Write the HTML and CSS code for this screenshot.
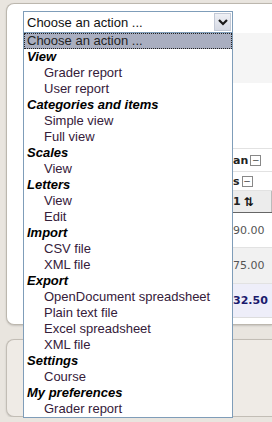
FILE: index.html
```html
<!DOCTYPE html>
<html lang="en">
<head>
    <meta charset="UTF-8">
    <title>Gradebook actions</title>
    <link rel="stylesheet" href="styles.css">
</head>
<body>
    <div class="page">
        <div class="panel">
            <div class="select">
                <span class="select-text">Choose an action ...</span>
                <span class="select-btn">
                    <svg width="10" height="7" viewBox="0 0 10 7"><polyline points="1,1 5,5 9,1" fill="none" stroke="#1a1a1a" stroke-width="2.2"/></svg>
                </span>
            </div>

            <div class="grades">
                <div class="band"></div>
                <div class="row toggle first"><b>an</b><span class="minus">&minus;</span></div>
                <div class="row toggle"><b>s</b><span class="minus">&minus;</span></div>
                <div class="row head"><b>1</b><span class="sort">&#8645;</span></div>
                <div class="row num">90.00</div>
                <div class="row num alt">75.00</div>
                <div class="row num avg">32.50</div>
            </div>
        </div>
        <div class="panel lower"></div>
    </div>

    <ul class="dropdown">
        <li class="selected">Choose an action ...</li>
        <li class="group">View</li>
        <li class="opt">Grader report</li>
        <li class="opt">User report</li>
        <li class="group">Categories and items</li>
        <li class="opt">Simple view</li>
        <li class="opt">Full view</li>
        <li class="group">Scales</li>
        <li class="opt">View</li>
        <li class="group">Letters</li>
        <li class="opt">View</li>
        <li class="opt">Edit</li>
        <li class="group">Import</li>
        <li class="opt">CSV file</li>
        <li class="opt">XML file</li>
        <li class="group">Export</li>
        <li class="opt">OpenDocument spreadsheet</li>
        <li class="opt">Plain text file</li>
        <li class="opt">Excel spreadsheet</li>
        <li class="opt">XML file</li>
        <li class="group">Settings</li>
        <li class="opt">Course</li>
        <li class="group">My preferences</li>
        <li class="opt">Grader report</li>
    </ul>
</body>
</html>
```

FILE: styles.css
```css
body {
    margin: 0;
    background-color: #e9e5df;
    font-family: 'Liberation Sans', Arial, sans-serif;
    font-size: 13px;
    color: #111;
}

.page {
    padding: 3px 0 0 6px;
}

.panel {
    background-color: #fff;
    border: 1px solid #bcb7ae;
    border-right: none;
    border-radius: 8px 0 0 8px;
    height: 320px;
    box-shadow: 0 1px 2px rgba(0, 0, 0, 0.15);
}

.panel.lower {
    margin-top: 14px;
    height: 76px;
    background-color: #efebe6;
    border-color: #c2bdb5;
}

.select {
    display: flex;
    align-items: center;
    width: 210px;
    height: 22px;
    box-sizing: border-box;
    margin: 7px 0 0 16px;
    border: 1px solid #7f9db9;
    background-color: #fff;
}

.select-text {
    flex: 1;
    padding-left: 3px;
}

.select-btn {
    display: flex;
    justify-content: center;
    align-items: center;
    width: 17px;
    height: 18px;
    margin-right: 1px;
    background: linear-gradient(#eef0f5, #d6dae4);
    border: 1px solid #c3c9d6;
    box-sizing: border-box;
}

.grades {
    padding-left: 220px;
    font-family: 'DejaVu Sans', Verdana, sans-serif;
    font-size: 11px;
    color: #555;
}

.band {
    height: 50px;
    background-color: #f5f5f5;
    margin-bottom: 65px;
}

.row {
    display: flex;
    align-items: center;
    padding-left: 6px;
    border-top: 1px solid #e2e2e2;
}

.toggle {
    height: 18px;
    color: #222;
}

.toggle.first {
    height: 22px;
}

.minus {
    display: inline-flex;
    justify-content: center;
    align-items: center;
    width: 9px;
    height: 9px;
    margin-left: 2px;
    border: 1px solid #888;
    font-size: 9px;
    line-height: 1;
    color: #444;
    background: #fff;
}

.head {
    height: 21px;
    background-color: #ececec;
    border-bottom: 1px solid #666;
    color: #222;
    box-shadow: inset -4px 0 0 -3px #bbb;
}

.sort {
    margin-left: 3px;
    font-size: 12px;
    font-weight: bold;
    color: #111;
}

.num {
    height: 34px;
}

.head + .num {
    border-top: none;
}

.alt {
    height: 35px;
    background-color: #f1f1f1;
}

.avg {
    height: 33px;
    background-color: #eeeef9;
    color: #1a1a6e;
    font-weight: bold;
    border-bottom: 1px solid #ddd;
}

.dropdown {
    position: absolute;
    top: 32px;
    left: 23px;
    width: 210px;
    box-sizing: border-box;
    margin: 0;
    padding: 0;
    list-style: none;
    background-color: #fff;
    border: 1px solid #7f9db9;
}

.dropdown li {
    height: 16px;
    line-height: 16px;
    padding-left: 3px;
    white-space: nowrap;
}

.dropdown .selected {
    background-color: #a9aec0;
    outline: 1px dotted #222;
    outline-offset: -1px;
    color: #222;
}

.dropdown .group {
    font-weight: bold;
    font-style: italic;
    color: #000;
}

.dropdown .opt {
    padding-left: 20px;
    color: #35203a;
}
```
